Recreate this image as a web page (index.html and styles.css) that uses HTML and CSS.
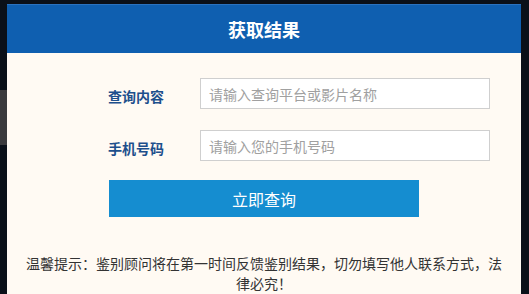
FILE: index.html
```html
<!DOCTYPE html>
<html lang="zh-CN">
<head>
<meta charset="utf-8">
<title>获取结果</title>
<link rel="stylesheet" href="styles.css">
</head>
<body>
<div class="modal">
  <div class="modal-header">获取结果</div>
  <div class="modal-body">
    <div class="form-row">
      <label class="form-label">查询内容</label>
      <input class="form-input" type="text" placeholder="请输入查询平台或影片名称">
    </div>
    <div class="form-row">
      <label class="form-label">手机号码</label>
      <input class="form-input" type="text" placeholder="请输入您的手机号码">
    </div>
    <button class="submit-btn" type="button">立即查询</button>
    <p class="hint">温馨提示：鉴别顾问将在第一时间反馈鉴别结果，切勿填写他人联系方式，法<br>律必究！</p>
  </div>
</div>
</body>
</html>
```

FILE: styles.css
```css
html, body {
  margin: 0;
  padding: 0;
  height: 100%;
  overflow: hidden;
}
body {
  background: linear-gradient(#3a3a3d, #3a3a3d) 0 90px / 7px 55px no-repeat, #0a1019;
  font-family: "Noto Sans CJK SC", "Noto Sans", sans-serif;
}
.modal {
  margin: 4px 0 0 7px;
  width: 514px;
  height: 300px;
  background: #fffaf3;
}
.modal-header {
  height: 49px;
  line-height: 49px;
  background: #0f5fb0;
  border-top: 1px solid #2a72c0;
  box-sizing: border-box;
  color: #ffffff;
  font-size: 18px;
  font-weight: bold;
  text-align: center;
}
.modal-body {
  padding-top: 25px;
}
.form-row {
  display: flex;
  align-items: center;
  gap: 36px;
  margin-left: 101px;
  margin-bottom: 21px;
}
.form-label {
  width: 56px;
  font-size: 14px;
  font-weight: bold;
  color: #1d4f8c;
  padding-top: 4px;
}
.form-input {
  width: 290px;
  height: 31px;
  box-sizing: border-box;
  border: 1px solid #cfcfcf;
  background: #ffffff;
  padding: 0 8px;
  font-family: inherit;
  font-size: 14px;
  color: #333;
  outline: none;
}
.form-input::placeholder {
  color: #a0a0a0;
}
.submit-btn {
  display: block;
  margin: -2px 0 0 102px;
  width: 310px;
  height: 37px;
  border: none;
  background: #158dd0;
  color: #ffffff;
  font-family: inherit;
  font-size: 16px;
  cursor: pointer;
}
.hint {
  margin: 36px 0 0;
  padding: 0 4px;
  font-size: 14px;
  line-height: 20px;
  color: #333333;
  text-align: center;
  white-space: nowrap;
}
```
